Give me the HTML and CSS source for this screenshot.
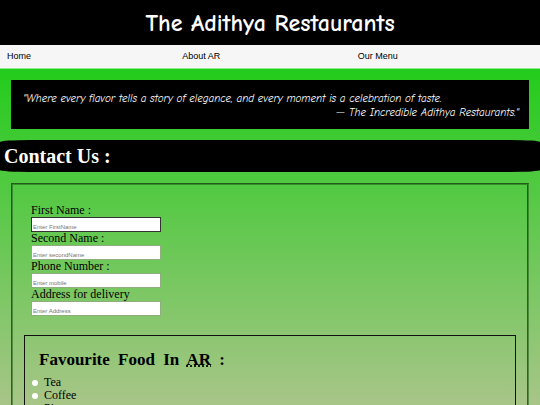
FILE: index.html
```html
<!DOCTYPE html>
<html lang="en">
<head>
	<meta charset="utf-8">
	<title>The Adithya Restaurants</title>
	<link rel="stylesheet" href="styles.css">
</head>
<body>
	<header class="banner">
		<h1>The Adithya Restaurants</h1>
	</header>

	<nav class="menu">
		<a href="#home">Home</a>
		<a href="#about">About AR</a>
		<a href="#menu">Our Menu</a>
	</nav>

	<blockquote class="quote">
		<p>"Where every flavor tells a story of elegance, and every moment is a celebration of taste.</p>
		<p class="author">— The Incredible Adithya Restaurants."</p>
	</blockquote>

	<h2 class="title">Contact Us :</h2>

	<form class="contact">
		<div class="fields">
			<label for="first">First Name :</label>
			<input type="text" id="first" class="active" placeholder="Enter FirstName">
			<label for="second">Second Name :</label>
			<input type="text" id="second" placeholder="Enter secondName">
			<label for="phone">Phone Number :</label>
			<input type="text" id="phone" placeholder="Enter mobile">
			<label for="address">Address for delivery</label>
			<input type="text" id="address" placeholder="Enter Address">
		</div>

		<div class="food">
			<h3>Favourite Food In <abbr title="Adithya Restaurants">AR</abbr> :</h3>
			<label class="option"><input type="radio" name="food" value="tea">Tea</label>
			<label class="option"><input type="radio" name="food" value="coffee">Coffee</label>
			<label class="option"><input type="radio" name="food" value="pizza">Pizza</label>
		</div>
	</form>
</body>
</html>
```
FILE: styles.css
```css
html {
	height: 100%;
	overflow: hidden;
}

body {
	margin: 0;
	min-height: 100%;
	font-family: "Liberation Serif", serif;
	font-size: 12px;
	line-height: 13px;
	color: #000;
	background: linear-gradient(#08cd06, #a8c588) fixed;
}

.banner {
	padding: 9px 0 7px;
	background: #000;
	color: #fff;
	text-align: center;
}

.banner h1 {
	margin: 0;
	font-family: "Comic Sans MS", "Comic Neue", cursive;
	font-size: 24px;
	line-height: 29px;
}

.menu {
	display: grid;
	grid-template-columns: repeat(3, 1fr);
	padding: 0 7px;
	background: #f6f6f6;
	border-bottom: 1px solid #90ee90;
}

.menu a {
	color: #000;
	font-family: "Liberation Sans", sans-serif;
	font-size: 9px;
	line-height: 23px;
	text-decoration: none;
}

.quote {
	margin: 11px;
	padding: 12px 10px 9px 12px;
	background: #000;
	color: #fff;
	font-family: "Comic Sans MS", "Comic Neue", cursive;
	font-size: 11px;
	font-style: italic;
	line-height: 14px;
}

.quote p {
	margin: 0;
}

.quote .author {
	text-align: right;
}

.title {
	margin: 11px 0;
	padding: 0 4px;
	border-radius: 30px / 2px;
	background: #000;
	color: #fff;
	font-size: 20px;
	line-height: 32px;
}

.contact {
	margin: 0 11px;
	padding: 19px 11px;
	border: 2px groove rgba(40, 100, 30, 0.6);
}

.fields {
	display: flex;
	flex-direction: column;
	align-items: flex-start;
	padding: 0 7px;
}

.fields input {
	box-sizing: border-box;
	width: 130px;
	height: 15px;
	padding: 4px 1px 0;
	border: 1px solid #8fae80;
	background: #fff;
	font-family: "Liberation Sans", sans-serif;
	font-size: 6px;
}

.fields .active {
	border-color: #333;
}

.food {
	margin-top: 19px;
	padding: 14px 7px;
	border: 1px solid #111;
}

.food h3 {
	margin: 0 0 6px 7px;
	font-size: 17px;
	line-height: 20px;
	word-spacing: 4px;
}

.option {
	display: flex;
	align-items: center;
	gap: 6px;
}

.option input {
	appearance: none;
	width: 6px;
	height: 6px;
	margin: 0;
	border-radius: 50%;
	background: #fff;
}
```
